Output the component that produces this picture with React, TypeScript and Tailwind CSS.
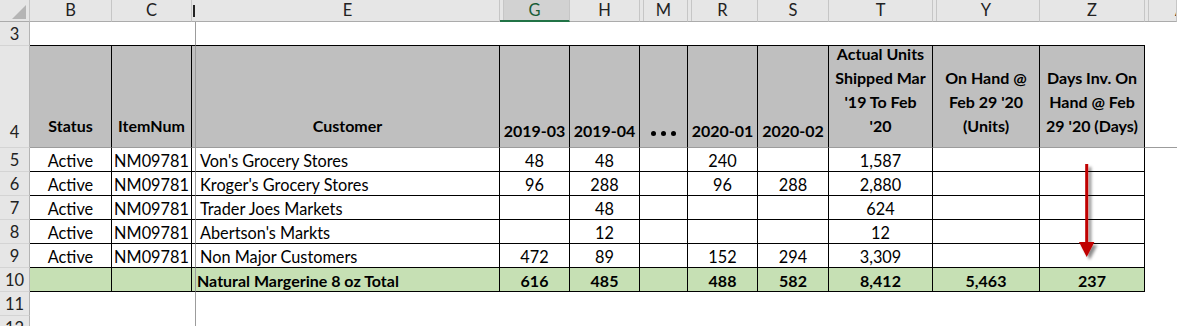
import React from "react";
import clsx from "clsx";

type DataRow = {
  n: number;
  customer: string;
  vals: string[]; // G H M R S T Y Z
};

const rows: DataRow[] = [
  { n: 5, customer: "Von's Grocery Stores", vals: ["48", "48", "", "240", "", "1,587", "", ""] },
  { n: 6, customer: "Kroger's Grocery Stores", vals: ["96", "288", "", "96", "288", "2,880", "", ""] },
  { n: 7, customer: "Trader Joes Markets", vals: ["", "48", "", "", "", "624", "", ""] },
  { n: 8, customer: "Abertson's Markts", vals: ["", "12", "", "", "", "12", "", ""] },
  { n: 9, customer: "Non Major Customers", vals: ["472", "89", "", "152", "294", "3,309", "", ""] },
];

const totals = ["616", "485", "", "488", "582", "8,412", "5,463", "237"];

function ColHead({ label, after, selected, pl }: { label: string; after?: boolean; selected?: boolean; pl?: boolean }) {
  return (
    <div
      className={clsx(
        "flex items-center overflow-hidden whitespace-nowrap border-r border-r-[#c6c6c6] border-b text-[16.5px] leading-[21px]",
        pl ? "justify-start pl-[30px]" : "justify-center",
        selected
          ? "bg-[#d2d2d2] border-b-2 border-b-[#217346] text-[#185c37]"
          : "bg-[#e6e6e6] border-b-[#ababab] text-[#222]",
        after && "shadow-[inset_3px_0_0_#e6e6e6,inset_4px_0_0_#c6c6c6]",
      )}
    >
      {label}
    </div>
  );
}

function RowHead({ n, pb }: { n: number; pb?: boolean }) {
  return (
    <div
      className={clsx(
        "flex items-end justify-center bg-[#e6e6e6] border-r border-r-[#b4b4b4] border-b border-b-[#d4d4d4] text-[16.5px] leading-[21px] text-[#222]",
        pb && "pb-[4px]",
      )}
    >
      {n}
    </div>
  );
}

// a plain bordered table cell
function Td({
  children,
  left,
  bold,
  green,
}: {
  children?: React.ReactNode;
  left?: boolean;
  bold?: boolean;
  green?: boolean;
}) {
  return (
    <div
      className={clsx(
        "flex items-end whitespace-nowrap border-r border-r-black border-b border-b-black leading-[21px] text-black",
        left ? "justify-start" : "justify-center",
        left && (bold ? "pl-[1px]" : "pl-[4px]"),
        bold ? "font-bold text-[16px]" : "text-[16.3px]",
        green ? "bg-[#c6e0b4]" : "bg-white",
      )}
    >
      {children}
    </div>
  );
}

function Th({ lines, raised }: { lines: string[]; raised?: boolean }) {
  return (
    <div
      className={clsx(
        "flex flex-col items-center justify-end whitespace-nowrap bg-[#bfbfbf] border-r border-r-black border-b border-b-[#9c9c9c] text-[16px] font-bold leading-[24px] text-black",
        raised ? "pb-[9px]" : "pb-[4px]",
      )}
    >
      {lines.map((l) => (
        <span key={l}>{l}</span>
      ))}
    </div>
  );
}

function Arrow() {
  return (
    <svg
      width="30"
      height="104"
      viewBox="0 0 30 104"
      className="pointer-events-none absolute left-[1074px] top-[160px]"
    >
      <defs>
        <filter id="arrowShadow" x="-60%" y="-10%" width="220%" height="130%">
          <feDropShadow dx="3" dy="3" stdDeviation="1.6" floodColor="#000" floodOpacity="0.45" />
        </filter>
      </defs>
      <g filter="url(#arrowShadow)">
        <rect x="11.2" y="4" width="3" height="80" fill="#c00000" />
        <polygon points="5,82 20.4,82 12.7,97" fill="#c00000" />
      </g>
    </svg>
  );
}

export default function App() {
  return (
    <div className="h-[326px] w-[1177px] overflow-hidden bg-white font-['Lato','Liberation_Sans',sans-serif]">
      <div className="relative grid grid-cols-[30px_82px_80px_4px_304px_70px_70px_48px_70px_71px_104px_107px_105px_1fr] grid-rows-[22px_24px_102px_24px_24px_24px_24px_24px_24px_24px_24px]">
        {/* column letters */}
        <div className="relative bg-[#e6e6e6] border-r border-r-[#c6c6c6] border-b border-b-[#ababab]">
          <svg width="30" height="22" viewBox="0 0 30 22" className="absolute left-0 top-0">
            <polygon points="26,5 26,19 12,19" fill="#b5b5b5" />
          </svg>
        </div>
        <ColHead label="B" />
        <ColHead label="C" />
        <div className="flex items-center justify-center bg-[#e6e6e6] border-b border-b-[#ababab]">
          <div className="h-[12px] w-[2px] bg-[#222]" />
        </div>
        <ColHead label="E" />
        <ColHead label="G" after selected />
        <ColHead label="H" />
        <ColHead label="M" after />
        <ColHead label="R" after />
        <ColHead label="S" />
        <ColHead label="T" />
        <ColHead label="Y" after />
        <ColHead label="Z" />
        <ColHead label="AB" after pl />

        {/* row 3 */}
        <RowHead n={3} />
        <div className="border-b border-b-black" />
        <div className="border-b border-b-black" />
        <div className="border-r border-r-[#9c9c9c] border-b border-b-black" />
        <div className="border-b border-b-black" />
        <div className="border-b border-b-black" />
        <div className="border-b border-b-black" />
        <div className="border-b border-b-black" />
        <div className="border-b border-b-black" />
        <div className="border-b border-b-black" />
        <div className="border-b border-b-black" />
        <div className="border-b border-b-black" />
        <div className="border-b border-b-black" />
        <div />

        {/* row 4 headers */}
        <RowHead n={4} pb />
        <Th lines={["Status"]} raised />
        <Th lines={["ItemNum"]} raised />
        <div className="bg-[#bfbfbf] border-r border-r-[#9c9c9c] border-b border-b-[#9c9c9c]" />
        <Th lines={["Customer"]} raised />
        <Th lines={["2019-03"]} />
        <Th lines={["2019-04"]} />
        <div className="flex items-end justify-center gap-[5px] bg-[#bfbfbf] border-r border-r-black border-b border-b-[#9c9c9c] pb-[11px]">
          <span className="h-[5px] w-[5px] rounded-full bg-black" />
          <span className="h-[5px] w-[5px] rounded-full bg-black" />
          <span className="h-[5px] w-[5px] rounded-full bg-black" />
        </div>
        <Th lines={["2020-01"]} />
        <Th lines={["2020-02"]} />
        <Th lines={["Actual Units", "Shipped Mar", "'19 To Feb", "'20"]} raised />
        <Th lines={["On Hand @", "Feb 29 '20", "(Units)"]} raised />
        <Th lines={["Days Inv. On", "Hand @ Feb", "29 '20 (Days)"]} raised />
        <div className="border-b border-b-[#9c9c9c]" />

        {/* body rows */}
        {rows.map((r) => (
          <React.Fragment key={r.n}>
            <RowHead n={r.n} />
            <Td>Active</Td>
            <Td>NM09781</Td>
            <div className="bg-white border-r border-r-[#9c9c9c] border-b border-b-black" />
            <Td left>{r.customer}</Td>
            {r.vals.map((v, i) => (
              <Td key={i}>{v}</Td>
            ))}
            <div />
          </React.Fragment>
        ))}

        {/* total row */}
        <RowHead n={10} />
        <Td green />
        <Td green />
        <div className="bg-[#c6e0b4] border-r border-r-[#9c9c9c] border-b border-b-black" />
        <Td left bold green>
          Natural Margerine 8 oz Total
        </Td>
        {totals.map((v, i) => (
          <Td key={i} bold green>
            {v}
          </Td>
        ))}
        <div />

        {/* rows 11, 12 */}
        {[11, 12].map((n) => (
          <React.Fragment key={n}>
            <RowHead n={n} />
            <div />
            <div />
            <div className="border-r border-r-[#9c9c9c]" />
            <div />
            <div />
            <div />
            <div />
            <div />
            <div />
            <div />
            <div />
            <div />
            <div />
          </React.Fragment>
        ))}

        <Arrow />
      </div>
    </div>
  );
}
